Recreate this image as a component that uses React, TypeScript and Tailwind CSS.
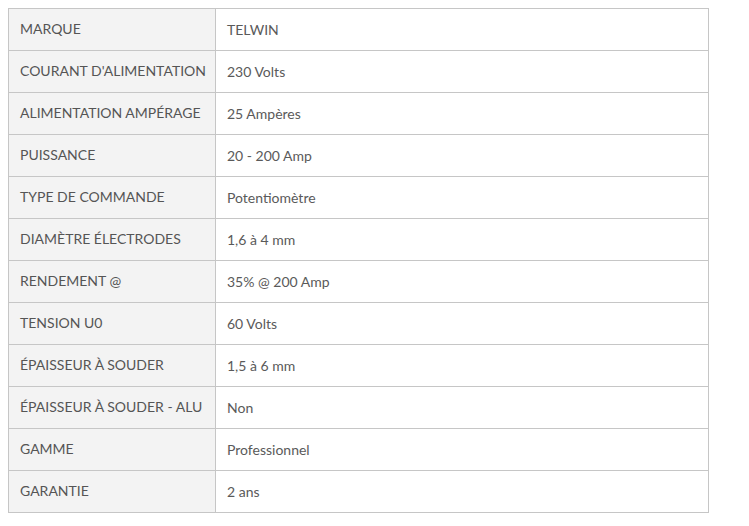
const specs = [
  ["MARQUE", "TELWIN"],
  ["COURANT D'ALIMENTATION", "230 Volts"],
  ["ALIMENTATION AMPÉRAGE", "25 Ampères"],
  ["PUISSANCE", "20 - 200 Amp"],
  ["TYPE DE COMMANDE", "Potentiomètre"],
  ["DIAMÈTRE ÉLECTRODES", "1,6 à 4 mm"],
  ["RENDEMENT @", "35% @ 200 Amp"],
  ["TENSION U0", "60 Volts"],
  ["ÉPAISSEUR À SOUDER", "1,5 à 6 mm"],
  ["ÉPAISSEUR À SOUDER - ALU", "Non"],
  ["GAMME", "Professionnel"],
  ["GARANTIE", "2 ans"],
];

export default function App() {
  return (
    <div className="w-[749px] h-[526px] bg-white pt-2 pl-2 font-['Lato','Liberation_Sans',sans-serif]">
      <table className="w-[701px] border-collapse border border-[#c6c6c6]">
        <tbody>
          {specs.map(([label, value]) => (
            <tr key={label} className="h-[42px]">
              <td className="w-[207px] border border-[#c6c6c6] bg-[#f3f3f3] pl-[11px] pb-[2px] text-[14px] text-[#555555] align-middle">
                {label}
              </td>
              <td className="border border-[#c6c6c6] pl-[11px] text-[14px] text-[#5a5a5a] align-middle">
                {value}
              </td>
            </tr>
          ))}
        </tbody>
      </table>
    </div>
  );
}
